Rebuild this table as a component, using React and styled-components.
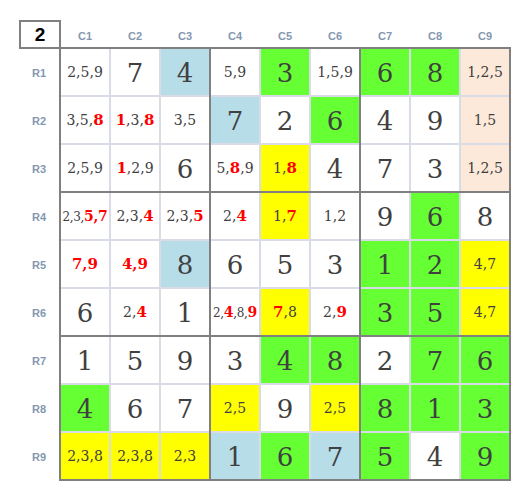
import React from "react";
import styled, { createGlobalStyle } from "styled-components";

const Global = createGlobalStyle`
  html, body { margin: 0; padding: 0; background: #ffffff; }
  body { font-family: "DejaVu Serif", serif; }
`;

const COLORS = {
  w: "#ffffff",
  g: "#66ff33",
  b: "#b7dde8",
  y: "#ffff00",
  p: "#fde9d9",
};

const ROWS = [
  [["2,5,9","w"],["7","w"],["4","b"],["5,9","w"],["3","g"],["1,5,9","w"],["6","g"],["8","g"],["1,2,5","p"]],
  [["3,5,[8]","w"],["[1],3,[8]","w"],["3,5","w"],["7","b"],["2","w"],["6","g"],["4","w"],["9","w"],["1,5","p"]],
  [["2,5,9","w"],["[1],2,9","w"],["6","w"],["5,[8],9","w"],["1,[8]","y"],["4","w"],["7","w"],["3","w"],["1,2,5","p"]],
  [["2,3,[5,7]","w"],["2,3,[4]","w"],["2,3,[5]","w"],["2,[4]","w"],["1,[7]","y"],["1,2","w"],["9","w"],["6","g"],["8","w"]],
  [["[7,9]","w"],["[4,9]","w"],["8","b"],["6","w"],["5","w"],["3","w"],["1","g"],["2","g"],["4,7","y"]],
  [["6","w"],["2,[4]","w"],["1","w"],["2,[4],8,[9]","w"],["[7],8","y"],["2,[9]","w"],["3","g"],["5","g"],["4,7","y"]],
  [["1","w"],["5","w"],["9","w"],["3","w"],["4","g"],["8","g"],["2","w"],["7","g"],["6","g"]],
  [["4","g"],["6","w"],["7","w"],["2,5","y"],["9","w"],["2,5","y"],["8","g"],["1","g"],["3","g"]],
  [["2,3,8","y"],["2,3,8","y"],["2,3","y"],["1","b"],["6","g"],["7","b"],["5","g"],["4","w"],["9","g"]],
];

const Page = styled.div`
  padding: 20px 0 0 19px;
  display: flex;
  flex-direction: column;
`;

const HeaderRow = styled.div`
  display: flex;
  align-items: stretch;
  height: 29px;
`;

const Corner = styled.div`
  box-sizing: border-box;
  width: 42px;
  height: 29px;
  border: 2px solid #808080;
  display: flex;
  align-items: center;
  justify-content: center;
  font-family: "Liberation Sans", Arial, sans-serif;
  font-weight: bold;
  font-size: 19px;
  color: #000000;
  padding-top: 1px;
`;

const ColLabels = styled.div`
  display: flex;
  gap: 2px;
`;

const Label = styled.div`
  display: flex;
  align-items: center;
  justify-content: center;
  font-family: "Liberation Sans", Arial, sans-serif;
  font-weight: bold;
  font-size: 11px;
  color: #8497b0;
`;

const ColLabel = styled(Label)`
  width: 48px;
  padding-top: 3px;
`;

const Body = styled.div`
  display: flex;
  margin-top: -2px;
`;

const RowLabels = styled.div`
  width: 40px;
  display: flex;
  flex-direction: column;
  gap: 2px;
  padding-top: 2px;
`;

const RowLabel = styled(Label)`
  height: 46px;
  padding-top: 2px;
  box-sizing: border-box;
`;

const Board = styled.div`
  display: grid;
  grid-template-columns: repeat(3, 148px);
  grid-template-rows: repeat(3, 142px);
  gap: 2px;
  padding: 2px;
  background: #808080;
`;

const Box = styled.div`
  display: grid;
  grid-template-columns: repeat(3, 48px);
  grid-template-rows: repeat(3, 46px);
  gap: 2px;
  background: #d9dce6;
`;

const Cell = styled.div`
  background: ${(p) => COLORS[p.$fill]};
  display: flex;
  align-items: center;
  justify-content: center;
  color: #404040;
  font-family: "DejaVu Serif", "Liberation Serif", serif;
  white-space: nowrap;
  overflow: hidden;
`;

const Big = styled.span`
  font-size: 26px;
  line-height: 1;
  padding-top: 2px;
`;

const Notes = styled.span`
  font-size: ${(p) => (p.$dense ? "12px" : "14px")};
  line-height: 1;
  letter-spacing: ${(p) => (p.$dense ? "-0.3px" : "0")};
`;

const Hi = styled.span`
  color: #ff0000;
  font-weight: bold;
  font-size: ${(p) => (p.$dense ? "14px" : "15px")};
`;

function renderNotes(text, dense) {
  const parts = text.split(/(\[[^\]]+\])/).filter(Boolean);
  return parts.map((part, i) =>
    part.startsWith("[") ? (
      <Hi key={i} $dense={dense}>{part.slice(1, -1)}</Hi>
    ) : (
      <React.Fragment key={i}>{part}</React.Fragment>
    )
  );
}

function SudokuCell({ value, fill }) {
  const isBig = /^\d$/.test(value);
  const dense = value.replace(/[\[\]]/g, "").split(",").length >= 4;
  return (
    <Cell $fill={fill}>
      {isBig ? <Big>{value}</Big> : <Notes $dense={dense}>{renderNotes(value, dense)}</Notes>}
    </Cell>
  );
}

export default function App() {
  const boxes = [];
  for (let br = 0; br < 3; br++) {
    for (let bc = 0; bc < 3; bc++) {
      const cells = [];
      for (let r = 0; r < 3; r++) {
        for (let c = 0; c < 3; c++) {
          const [v, f] = ROWS[br * 3 + r][bc * 3 + c];
          cells.push(<SudokuCell key={`${r}-${c}`} value={v} fill={f} />);
        }
      }
      boxes.push(<Box key={`${br}-${bc}`}>{cells}</Box>);
    }
  }
  return (
    <>
      <Global />
      <Page>
        <HeaderRow>
          <Corner>2</Corner>
          <ColLabels>
            {Array.from({ length: 9 }, (_, i) => (
              <ColLabel key={i}>C{i + 1}</ColLabel>
            ))}
          </ColLabels>
        </HeaderRow>
        <Body>
          <RowLabels>
            {Array.from({ length: 9 }, (_, i) => (
              <RowLabel key={i}>R{i + 1}</RowLabel>
            ))}
          </RowLabels>
          <Board>{boxes}</Board>
        </Body>
      </Page>
    </>
  );
}
